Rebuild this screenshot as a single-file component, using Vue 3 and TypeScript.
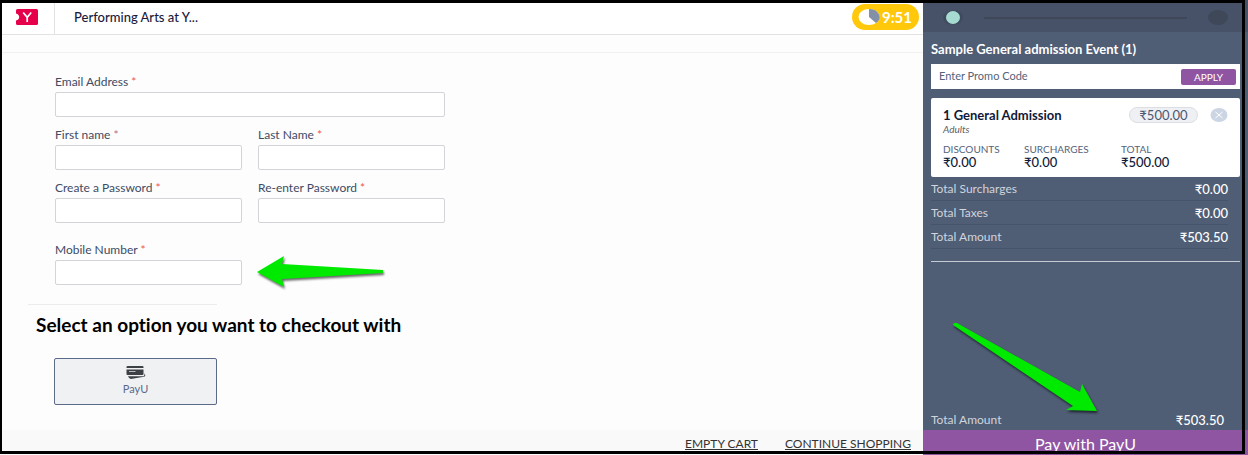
<script setup lang="ts">
import { ref } from 'vue'

interface Field {
  id: string
  label: string
  type: string
  wide?: boolean
  muted?: boolean
}

const fields: Field[] = [
  { id: 'email', label: 'Email Address', type: 'email', wide: true },
  { id: 'first-name', label: 'First name', type: 'text', muted: true },
  { id: 'last-name', label: 'Last Name', type: 'text' },
  { id: 'password', label: 'Create a Password', type: 'password' },
  { id: 'password-again', label: 'Re-enter Password', type: 'password' },
]

const values = ref<Record<string, string>>({})
const mobile = ref('')
const promo = ref('')

const breakdown = [
  { label: 'Discounts', value: '₹0.00' },
  { label: 'Surcharges', value: '₹0.00' },
  { label: 'Total', value: '₹500.00' },
]

const totals = [
  { label: 'Total Surcharges', value: '₹0.00' },
  { label: 'Total Taxes', value: '₹0.00' },
  { label: 'Total Amount', value: '₹503.50' },
]
</script>

<template>
  <div class="page">
    <main class="main">
      <header class="topbar">
        <a class="logo" href="#" aria-label="Home">
          <svg width="22" height="16" viewBox="0 0 22 16">
            <path d="M1.5 0H20.5Q22 0 22 1.500V14.500Q22 16 20.500 16H1.500Q0 16 0 14.500V11.500Q3.200 10.500 3.200 8Q3.200 5.500 0 4.500V1.500Q0 0 1.500 0Z" fill="#e6004c" />
            <path d="M7.200 3.500L11.200 8.300L15.200 3.500M11.200 8.300V13" fill="none" stroke="#fff" stroke-width="1.700" />
          </svg>
        </a>
        <h1 class="venue">Performing Arts at Y...</h1>
        <div class="timer">
          <svg width="22" height="16" viewBox="0 0 22 16">
            <ellipse cx="11" cy="8" rx="10.500" ry="8" fill="#fff" />
            <path d="M11 8V0A10.500 8 0 0 1 18 14Z" fill="#8490a6" />
          </svg>
          <span>9:51</span>
        </div>
      </header>
      <div class="subbar"></div>

      <form class="form" @submit.prevent>
        <div class="fields">
          <div v-for="f in fields" :key="f.id" class="field" :class="{ wide: f.wide }">
            <label :for="f.id">{{ f.label }} <i :class="{ muted: f.muted }">*</i></label>
            <input :id="f.id" v-model="values[f.id]" :type="f.type" />
          </div>
          <div class="field mobile">
            <label for="mobile">Mobile Number <i>*</i></label>
            <input id="mobile" v-model="mobile" type="tel" />
            <svg class="arrow-left" width="132" height="40" viewBox="0 0 132 40">
              <path d="M2 20L29 4L27 12L128 18V21L27 27L29 35Z" fill="#00ea00" />
            </svg>
          </div>
        </div>
        <hr class="rule" />
        <h2>Select an option you want to checkout with</h2>
        <button class="method" type="button">
          <svg width="20" height="13" viewBox="0 0 20 13">
            <path d="M1.500 0H16.500Q17.500 0 17.500 1V2H.5V1Q.5 0 1.500 0ZM.5 3.500H17.500V8Q17.500 9 16.500 9H1.500Q.5 9 .5 8Z" fill="#3d4045" />
            <path d="M2 10.200L17.500 10.200Q18.500 10 18.500 8V7L19.300 9.500Q19.300 10.500 18 10.800L5 12.900Q3 13 2 10.200Z" fill="#3d4045" />
            <path d="M3 5.500H9.500" stroke="#d5d8dc" stroke-width=".8" />
          </svg>
          <span>PayU</span>
        </button>
      </form>

      <footer class="footer">
        <a href="#">EMPTY CART</a>
        <a href="#">CONTINUE SHOPPING</a>
      </footer>
    </main>

    <aside class="cart">
      <div class="steps">
        <span class="dot active"></span>
        <span class="track"></span>
        <span class="dot"></span>
      </div>
      <div class="summary">
        <h3>Sample General admission Event (1)</h3>
        <form class="promo" @submit.prevent>
          <input v-model="promo" type="text" placeholder="Enter Promo Code" aria-label="Enter Promo Code" />
          <button type="submit">APPLY</button>
        </form>
        <section class="ticket">
          <div class="ticket-head">
            <div class="ticket-name">
              <strong>1 General Admission</strong>
              <em>Adults</em>
            </div>
            <span class="price">₹500.00</span>
            <button class="remove" type="button" aria-label="Remove ticket">
              <svg width="18" height="14" viewBox="0 0 18 14">
                <ellipse cx="9" cy="7" rx="8.500" ry="7" fill="#cbd5e4" />
                <path d="M5.500 4L12.500 10M12.500 4L5.500 10" stroke="#fff" stroke-width="1" />
              </svg>
            </button>
          </div>
          <dl class="breakdown">
            <div v-for="b in breakdown" :key="b.label">
              <dt>{{ b.label }}</dt>
              <dd>{{ b.value }}</dd>
            </div>
          </dl>
        </section>
        <dl class="totals">
          <div v-for="t in totals" :key="t.label">
            <dt>{{ t.label }}</dt>
            <dd>{{ t.value }}</dd>
          </div>
        </dl>
      </div>
      <div class="due">
        <span>Total Amount</span>
        <strong>₹503.50</strong>
        <svg class="arrow-down" width="152" height="98" viewBox="0 0 152 98">
          <path d="M4 3L7 3L130 72L132 64L147 91L116 90L123 86L3 5Z" fill="#00ea00" />
        </svg>
      </div>
      <button class="pay" type="button">Pay with PayU</button>
    </aside>
    <div class="frame"></div>
  </div>
</template>

<style>
body {
  margin: 0;
}
</style>

<style scoped>
* {
  box-sizing: border-box;
}

.page {
  position: relative;
  display: grid;
  grid-template-columns: minmax(0, 1fr) 325px;
  min-height: 100vh;
  font-family: Lato, "Liberation Sans", sans-serif;
  font-size: 12px;
  font-variant-ligatures: none;
  line-height: 16px;
  color: #3e4b63;
  background: #fdfdfd;
}

h1,
h2,
h3,
dl,
dd {
  margin: 0;
}

button,
input {
  font: inherit;
}

svg {
  display: block;
}

.frame {
  position: absolute;
  inset: 0 3px 1px 0;
  border: 3px solid #000;
  border-left-width: 2px;
  pointer-events: none;
}

.main {
  display: flex;
  flex-direction: column;
}

.topbar {
  display: flex;
  align-items: center;
  height: 35px;
  padding-right: 4px;
  border-bottom: 1px solid #e3e3e5;
  background: #fff;
}

.logo {
  display: flex;
  align-items: center;
  align-self: stretch;
  width: 55px;
  padding-left: 16px;
  border-right: 1px solid #e3e3e5;
}

.venue {
  flex: 1;
  padding-left: 19px;
  font-size: 13px;
  font-weight: 500;
  color: #1a1a3c;
}

.timer {
  display: flex;
  align-items: center;
  gap: 2px;
  height: 26px;
  padding: 0 7px 0 6px;
  border-radius: 13px;
  background: #ffc80a;
  color: #fff;
  font-size: 15px;
  font-weight: 700;
}

.subbar {
  height: 18px;
  border-bottom: 1px solid #f0f0f1;
}

.form {
  flex: 1;
  padding: 21px 28px 24px;
}

.fields {
  display: grid;
  grid-template-columns: 187px 187px;
  gap: 10px 16px;
  padding-left: 27px;
}

.field {
  position: relative;
  display: flex;
  flex-direction: column;
  gap: 2px;
}

.field.wide {
  grid-column: span 2;
}

.field.mobile {
  margin-top: 9px;
}

.field i {
  font-style: normal;
  color: #f2564c;
}

.field i.muted {
  color: #b5737c;
}

.field input {
  width: 100%;
  height: 25px;
  padding: 0 8px;
  border: 1px solid #d3d4da;
  border-radius: 2px;
  background: #fff;
}

.arrow-left {
  position: absolute;
  top: 10px;
  left: 200px;
  filter: drop-shadow(1px 2px 1px rgba(0, 0, 0, 0.6));
}

.rule {
  width: 189px;
  height: 1px;
  margin: 19px 0 10px;
  border: 0;
  background: #ececee;
}

h2 {
  padding-left: 8px;
  font-size: 19px;
  line-height: 20px;
  color: #000;
}

.method {
  display: flex;
  flex-direction: column;
  align-items: center;
  gap: 2px;
  width: 163px;
  height: 47px;
  margin: 23px 0 0 26px;
  padding: 7px 0 0;
  border: 1px solid #5a6a89;
  border-radius: 2px;
  background: #f0f1f3;
  color: #5a6a89;
  font-size: 11px;
}

.footer {
  display: flex;
  justify-content: flex-end;
  gap: 27px;
  height: 25px;
  padding: 6px 12px 0 0;
  background: #f9f9f9;
}

.footer a {
  color: #333;
}

.cart {
  display: flex;
  flex-direction: column;
  background: #4f5d75;
  color: #fff;
}

.steps {
  display: flex;
  align-items: center;
  gap: 21px;
  height: 32px;
  padding: 3px 20px 0 20px;
  background: #475268;
}

.dot {
  width: 20px;
  height: 15px;
  border-radius: 50%;
  background: #3e4859;
}

.dot.active {
  border: 3px solid #3f4a5e;
  border-width: 1px 3px;
  background: #a5dbd0;
}

.track {
  flex: 1;
  height: 2px;
  background: #3e4859;
}

.summary {
  margin: 0 8px;
  padding: 9px 0 12px;
  border-bottom: 1px solid #c5cad3;
}

h3 {
  font-size: 13px;
  line-height: 16px;
}

.promo {
  display: flex;
  align-items: center;
  height: 25px;
  margin-top: 7px;
  padding-right: 4px;
  background: #fff;
}

.promo input {
  flex: 1;
  min-width: 0;
  padding: 0 8px 2px;
  border: 0;
  background: none;
  font-size: 11px;
}

.promo input::placeholder {
  color: #55637b;
  opacity: 1;
}

.promo button {
  width: 55px;
  height: 16px;
  padding: 0;
  border: 0;
  border-radius: 2px;
  background: #9055a2;
  color: #fff;
  font-size: 10px;
}

.ticket {
  margin-top: 9px;
  padding: 9px 12px 8px 12px;
  border-radius: 2px;
  background: #fff;
  color: #101a38;
}

.ticket-head {
  display: flex;
  align-items: flex-start;
}

.ticket-name {
  display: flex;
  flex: 1;
  flex-direction: column;
}

.ticket-name strong {
  font-size: 13px;
}

.ticket-name em {
  font-size: 10px;
  line-height: 12px;
  color: #5f6064;
}

.price {
  width: 69px;
  border: 1px solid #dcdee4;
  border-radius: 8px;
  background: #eff0f3;
  color: #4a5872;
  font-size: 13px;
  line-height: 14px;
  text-align: center;
}

.remove {
  margin: 1px 0 0 12px;
  padding: 0;
  border: 0;
  background: none;
}

.breakdown {
  display: grid;
  grid-template-columns: 81px 97px 1fr;
  margin-top: 8px;
}

.breakdown dt {
  font-size: 10px;
  line-height: 12px;
  text-transform: uppercase;
  color: #55637b;
}

.breakdown dd {
  font-size: 13px;
  line-height: 14px;
  font-weight: 500;
}

.totals div {
  display: flex;
  justify-content: space-between;
  height: 24px;
  margin-right: 12px;
  padding-top: 4px;
  border-bottom: 1px solid #465369;
}

.totals dt,
.due span {
  font-size: 12px;
  color: #d0d5de;
}

.totals dd {
  font-size: 13px;
  font-weight: 500;
}

.due {
  position: relative;
  display: flex;
  justify-content: space-between;
  margin-top: auto;
  padding: 0 24px 2px 8px;
}

.due strong {
  font-size: 13px;
  font-weight: 500;
}

.arrow-down {
  position: absolute;
  right: 146px;
  bottom: 12px;
  filter: drop-shadow(1px 2px 1px rgba(0, 0, 0, 0.6));
}

.pay {
  height: 25px;
  padding: 2px 0 0;
  border: 0;
  background: #9055a2;
  color: #fff;
  font-size: 16px;
  line-height: 20px;
}
</style>
